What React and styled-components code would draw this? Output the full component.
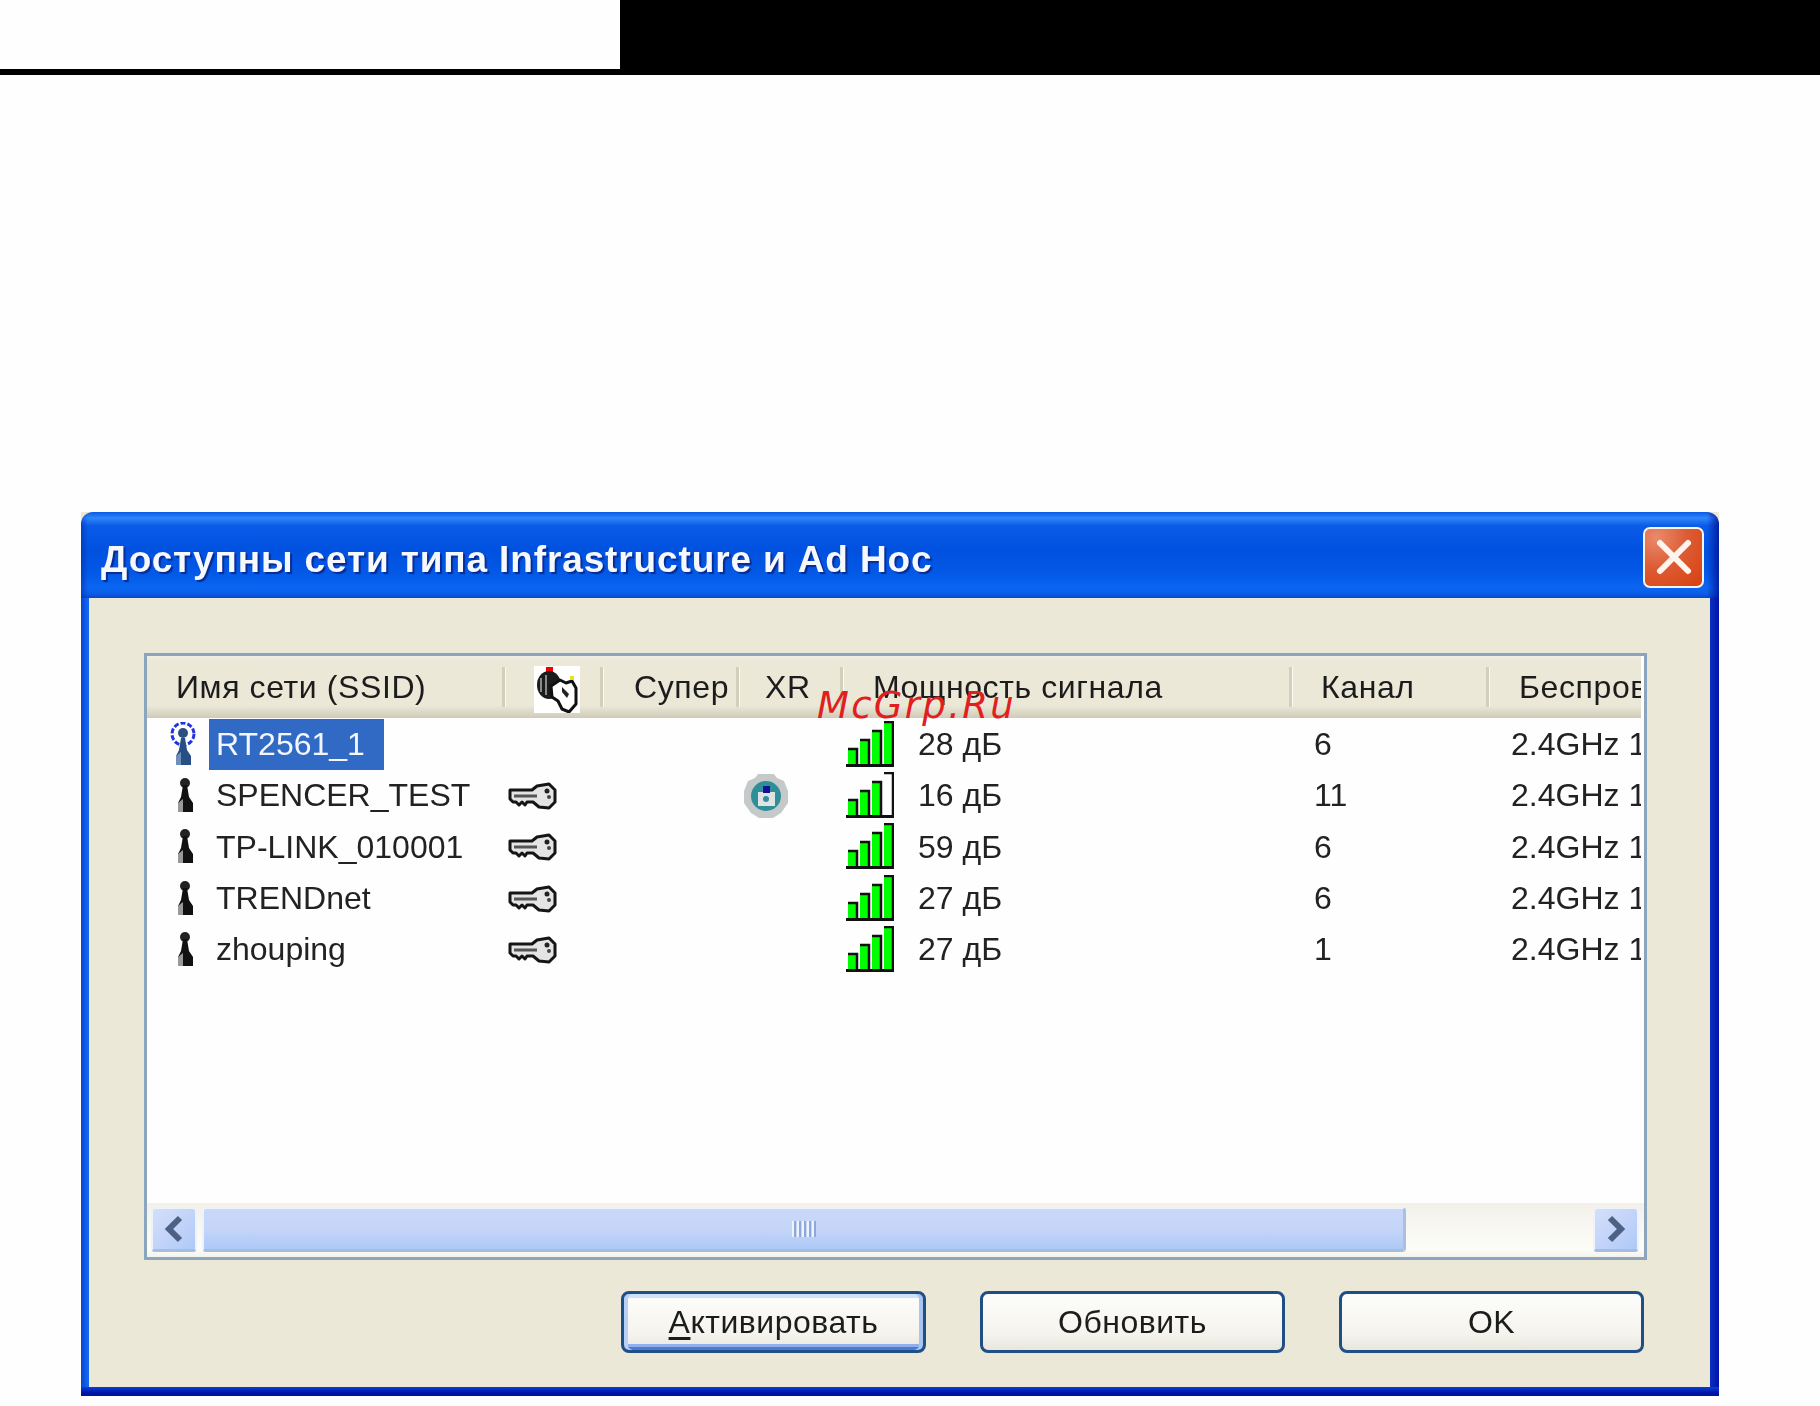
import React from 'react'
import styled, { createGlobalStyle } from 'styled-components'

const GlobalStyle = createGlobalStyle`
  html, body {
    margin: 0;
    padding: 0;
    background: #fefefe;
  }
  body {
    font-family: "Liberation Sans", Arial, sans-serif;
  }
`

const Page = styled.div`
  width: 1820px;
  height: 1406px;
  overflow: hidden;
  display: flex;
  flex-direction: column;
  position: relative;
`

const TopBar = styled.div`
  height: 75px;
  display: flex;
  background: #000;
`

const TopBlank = styled.div`
  width: 620px;
  height: 69px;
  background: #fefefe;
`

const Window = styled.div`
  width: 1638px;
  height: 884px;
  margin: 437px 0 0 81px;
  display: flex;
  flex-direction: column;
  box-sizing: border-box;
  filter: blur(0.6px);
  background:
    linear-gradient(#ebe8d8 0 12px, transparent 12px),
    linear-gradient(180deg, transparent calc(100% - 9px), #0a3ed6 calc(100% - 9px), #0014a6 calc(100% - 3px), #00109c 100%),
    linear-gradient(90deg, #0a44d4 0, #1168f0 7px, #1168f0 calc(100% - 10px), #0a30c0 calc(100% - 9px), #0014a8 100%);
`

const TitleBar = styled.div`
  height: 86px;
  flex: none;
  box-sizing: border-box;
  padding: 9px 15px 0 20px;
  display: flex;
  align-items: center;
  justify-content: space-between;
  border-radius: 12px 12px 0 0;
  background:
    linear-gradient(90deg, rgba(0, 40, 170, 0.5) 0, transparent 7px, transparent calc(100% - 12px), rgba(0, 16, 150, 0.8) 100%),
    linear-gradient(
      180deg,
      #0a5ae6 0%,
      #2f86fa 7%,
      #0a5be8 16%,
      #0151e0 45%,
      #0358e6 70%,
      #0a66f2 88%,
      #0a5ce6 95%,
      #0648c8 100%
    );
`

const Title = styled.div`
  font-size: 37px;
  font-weight: 700;
  color: #fff;
  letter-spacing: 0.87px;
  white-space: nowrap;
  text-shadow: 2px 2px 1px #0a2a90;
  opacity: 0.96;
`

const CloseButton = styled.div`
  width: 61px;
  height: 61px;
  margin-top: -5px;
  box-sizing: border-box;
  border: 2px solid #f4f4f4;
  border-radius: 7px;
  background: radial-gradient(circle at 20% 15%, #ea8a6c 0%, #dd5c35 45%, #d8400e 100%);
  display: flex;
  align-items: center;
  justify-content: center;
`

const Client = styled.div`
  flex: 1;
  margin: 0 9px 9px 8px;
  box-sizing: border-box;
  background: #ebe8d8;
  padding: 55px 0 0 55px;
  display: flex;
  flex-direction: column;
`

const ListBox = styled.div`
  width: 1503px;
  height: 607px;
  box-sizing: border-box;
  border: 3px solid #8ca5bf;
  background: #fefefe;
  display: flex;
  flex-direction: column;
  overflow: hidden;
`

const Header = styled.div`
  height: 62px;
  flex: none;
  margin-right: 3px;
  background: linear-gradient(180deg, #f0eee2 0%, #ebe8d8 8%, #ebe8d8 80%, #d9d5c2 93%, #cfcbb8 100%);
  display: grid;
  grid-template-columns: ${p => p.$columns};
  overflow: hidden;
`

const HeaderCell = styled.div`
  display: flex;
  align-items: center;
  padding-left: ${p => p.$pad}px;
  font-size: 32px;
  letter-spacing: 0.6px;
  color: #1c1c1c;
  white-space: nowrap;
  position: relative;
  min-width: 0;
  &::after {
    content: "";
    display: ${p => (p.$last ? 'none' : 'block')};
    position: absolute;
    right: -2px;
    top: 11px;
    width: 3px;
    height: 40px;
    background: #d2cfbd;
    border-right: 1px solid #fbfaf2;
  }
`

const ConnectSvg = styled.svg`
  margin-top: 4px;
  background: #fff;
`

const SignalSvg = styled.svg`
  margin-top: -2px;
  flex: none;
`

const Rows = styled.div`
  flex: 1;
  padding-top: 1px;
  display: flex;
  flex-direction: column;
`

const Row = styled.div`
  height: 51.3px;
  flex: none;
  margin-right: 3px;
  display: grid;
  grid-template-columns: ${p => p.$columns};
  overflow: hidden;
  align-items: center;
  font-size: 32px;
  color: #222;
`

const Cell = styled.div`
  display: flex;
  align-items: center;
  height: 100%;
  padding-left: ${p => p.$pad}px;
  gap: ${p => p.$gap || 0}px;
  white-space: nowrap;
  min-width: 0;
`

const Name = styled.span`
  height: 51px;
  display: flex;
  align-items: center;
  padding: 0 19px 0 7px;
  margin-left: 11px;
  background: ${p => (p.$selected ? '#316ac5' : 'transparent')};
  color: ${p => (p.$selected ? '#f4f6fc' : '#222')};
`

const ScrollBar = styled.div`
  margin-top: auto;
  height: 54px;
  flex: none;
  box-sizing: border-box;
  padding: 4px 5px 5px 4px;
  background: linear-gradient(180deg, #f2f0e8 0%, #f6f5ef 30%, #fdfdf8 85%, #f4f3ec 100%);
  display: flex;
  gap: 6px;
`

const ArrowButton = styled.div`
  width: 46px;
  flex: none;
  box-sizing: border-box;
  border: 2px solid #eef3fb;
  border-bottom: 3px solid #a3bde3;
  border-radius: 4px;
  background: linear-gradient(135deg, #d4e0fa 0%, #c3d4f9 50%, #aecaf6 100%);
  display: flex;
  align-items: center;
  justify-content: center;
`

const Thumb = styled.div`
  width: 1204px;
  margin-left: -1px;
  box-sizing: border-box;
  border: 2px solid #eef3fb;
  border-bottom: 3px solid #a7bddd;
  border-right: 3px solid #a9c0e2;
  border-radius: 4px;
  background: linear-gradient(180deg, #c9d8fa 0%, #c5d5f9 50%, #adc9f6 100%);
  display: flex;
  align-items: center;
  justify-content: center;
  margin-right: auto;
`

const Grip = styled.div`
  width: 24px;
  height: 16px;
  background: repeating-linear-gradient(90deg, #eef3fd 0 2px, #8ea8d8 2px 4px, #c5d5f9 4px 5px);
`

const ButtonRow = styled.div`
  margin-top: 31px;
  padding-left: 477px;
  display: flex;
  gap: 54px;
`

const Button = styled.div`
  width: 305px;
  height: 62px;
  box-sizing: border-box;
  border: 3px solid #1f4f84;
  border-radius: 8px;
  background: linear-gradient(180deg, #fdfdfb 0%, #f5f4ee 70%, #e8e6dc 100%);
  font-size: 32px;
  letter-spacing: 0.5px;
  color: #1c1c1c;
  display: flex;
  align-items: center;
  justify-content: center;
  ${p =>
    p.$focused &&
    `box-shadow: inset 4px 0 0 #b8d0f6, inset -4px 0 0 #a9c6f2, inset 0 4px 0 #cfe0f9, inset 0 -3px 0 #4d7ad8, inset 0 -6px 0 #8fb0ea;`}
`

const Mnemonic = styled.span`
  text-decoration: underline;
  text-underline-offset: 4px;
`

const Watermark = styled.div`
  position: absolute;
  left: 817px;
  top: 684px;
  font-family: "DejaVu Sans", sans-serif;
  font-style: italic;
  font-size: 37px;
  letter-spacing: 2.3px;
  color: #e01f1f;
  white-space: nowrap;
`

const TowerIcon = ({ active }) => (
  <svg width="30" height="46" viewBox="0 0 30 46">
    {active ? (
      <>
        <circle cx="15" cy="12" r="11" fill="none" stroke="#2233e0" strokeWidth="3" strokeDasharray="5 2" />
        <ellipse cx="15" cy="11" rx="5" ry="5" fill="#2c4f80" />
        <path d="M13 16 L17 16 L19 28 L23 34 L23 43 L8 43 L8 34 L11 28 Z" fill="#274f86" />
        <path d="M8 34 L13 30 L13 43 L8 43 Z" fill="#6f8fb8" />
      </>
    ) : (
      <g transform="translate(2 -4)">
        <ellipse cx="15" cy="14" rx="5" ry="5" fill="#222" />
        <path d="M13 16 L17 16 L19 28 L23 34 L23 43 L8 43 L8 34 L11 28 Z" fill="#111" />
        <path d="M8 34 L13 30 L13 43 L8 43 Z" fill="#999" />
      </g>
    )}
  </svg>
)

const KeyIcon = () => (
  <svg width="50" height="28" viewBox="0 0 50 28">
    <path
      d="M3 8 L25 8 L30 4 L42 2 L48 8 L48 20 L42 26 L32 25 L26 20 L20 20 L18 23 L15 20 L12 23 L9 20 L6 20 L3 17 Z"
      fill="#e4e4e4"
      stroke="#151515"
      strokeWidth="3"
      strokeLinejoin="round"
    />
    <path d="M7 14 L30 14" stroke="#555" strokeWidth="3" />
    <circle cx="40" cy="9" r="2.5" fill="#222" />
    <circle cx="42" cy="15" r="2" fill="#444" />
  </svg>
)

const XrIcon = () => (
  <svg width="46" height="46" viewBox="0 0 46 46">
    <path
      d="M15 1 L31 1 L34 5 L41 8 L45 18 L45 30 L38 40 L30 45 L16 45 L8 40 L1 30 L1 18 L5 8 L12 5 Z"
      fill="#c6c9ca"
    />
    <circle cx="23" cy="23" r="15" fill="#2e8f98" />
    <rect x="15" y="19" width="17" height="14" fill="#dfe3e4" />
    <rect x="20" y="13" width="7" height="7" fill="#10109a" />
    <circle cx="23" cy="26" r="3" fill="#2e8f98" />
  </svg>
)

const SignalIcon = ({ level }) => (
  <SignalSvg width="48" height="46" viewBox="0 0 48 46">
    {[0, 1, 2, 3].map(i => {
      const top = 27 - i * 9
      const x = 2 + i * 12
      return (
        <g key={i}>
          {i < level && <rect x={x} y={top + 1} width="9" height={43 - top} fill="#00ff00" />}
          <path d={`M${x} ${top + 1} H${x + 9} V44`} fill="none" stroke="#111" strokeWidth="2.5" />
        </g>
      )
    })}
    <rect x="0" y="43" width="48" height="3" fill="#111" />
  </SignalSvg>
)

const ConnectIcon = () => (
  <ConnectSvg width="46" height="47" viewBox="0 0 46 47">
    <rect x="12" y="1" width="7" height="6" fill="#f00000" />
    <ellipse cx="15" cy="19" rx="12" ry="14" fill="#1c1c1c" />
    <path d="M7 12 V26 M12 9 V29" stroke="#8a8a8a" strokeWidth="2" />
    <path
      d="M17 20 L26 14 L32 17 L38 15 L42 22 L42 38 L35 46 L28 43 L24 35 L18 31 Z"
      fill="#fff"
      stroke="#111"
      strokeWidth="3"
      strokeLinejoin="round"
    />
    <rect x="36" y="10" width="4" height="4" fill="#e8e020" />
    <path d="M28 21 L35 28 L33 32 L28 26 Z" fill="#222" />
  </ConnectSvg>
)

const columns = '357px 98px 136px 104px 449px 197px 155px'

const networks = [
  { name: 'RT2561_1', secure: false, xr: false, level: 4, db: '28 дБ', channel: '6', selected: true },
  { name: 'SPENCER_TEST', secure: true, xr: true, level: 3, db: '16 дБ', channel: '11' },
  { name: 'TP-LINK_010001', secure: true, xr: false, level: 4, db: '59 дБ', channel: '6' },
  { name: 'TRENDnet', secure: true, xr: false, level: 4, db: '27 дБ', channel: '6' },
  { name: 'zhouping', secure: true, xr: false, level: 4, db: '27 дБ', channel: '1' }
]

const App = () => (
  <Page>
    <GlobalStyle />
    <TopBar>
      <TopBlank />
    </TopBar>
    <Window>
      <TitleBar>
        <Title>Доступны сети типа Infrastructure и Ad Hoc</Title>
        <CloseButton>
          <svg width="38" height="38" viewBox="0 0 38 38">
            <path d="M5 5 L33 33 M33 5 L5 33" stroke="#fdf4ee" strokeWidth="6" strokeLinecap="round" />
          </svg>
        </CloseButton>
      </TitleBar>
      <Client>
        <ListBox>
          <Header $columns={columns}>
            <HeaderCell $pad={29}>Имя сети (SSID)</HeaderCell>
            <HeaderCell $pad={30}>
              <ConnectIcon />
            </HeaderCell>
            <HeaderCell $pad={32}>Супер</HeaderCell>
            <HeaderCell $pad={27}>XR</HeaderCell>
            <HeaderCell $pad={31}>Мощность сигнала</HeaderCell>
            <HeaderCell $pad={30}>Канал</HeaderCell>
            <HeaderCell $pad={31} $last>Беспроводной режим</HeaderCell>
          </Header>
          <Rows>
            {networks.map(n => (
              <Row key={n.name} $columns={columns}>
                <Cell $pad={21}>
                  <TowerIcon active={n.selected} />
                  <Name $selected={n.selected}>{n.name}</Name>
                </Cell>
                <Cell $pad={3}>{n.secure && <KeyIcon />}</Cell>
                <Cell />
                <Cell $pad={5}>{n.xr && <XrIcon />}</Cell>
                <Cell $pad={4} $gap={24}>
                  <SignalIcon level={n.level} />
                  {n.db}
                </Cell>
                <Cell $pad={23}>{n.channel}</Cell>
                <Cell $pad={23}>2.4GHz 11b/g</Cell>
              </Row>
            ))}
          </Rows>
          <ScrollBar>
            <ArrowButton>
              <svg width="20" height="28" viewBox="0 0 20 28">
                <path d="M16 3 L5 14 L16 25" fill="none" stroke="#4d6185" strokeWidth="6" />
              </svg>
            </ArrowButton>
            <Thumb>
              <Grip />
            </Thumb>
            <ArrowButton>
              <svg width="20" height="28" viewBox="0 0 20 28">
                <path d="M4 3 L15 14 L4 25" fill="none" stroke="#4d6185" strokeWidth="6" />
              </svg>
            </ArrowButton>
          </ScrollBar>
        </ListBox>
        <ButtonRow>
          <Button $focused>
            <Mnemonic>А</Mnemonic>ктивировать
          </Button>
          <Button>Обновить</Button>
          <Button>OK</Button>
        </ButtonRow>
      </Client>
    </Window>
    <Watermark>McGrp.Ru</Watermark>
  </Page>
)

export default App
